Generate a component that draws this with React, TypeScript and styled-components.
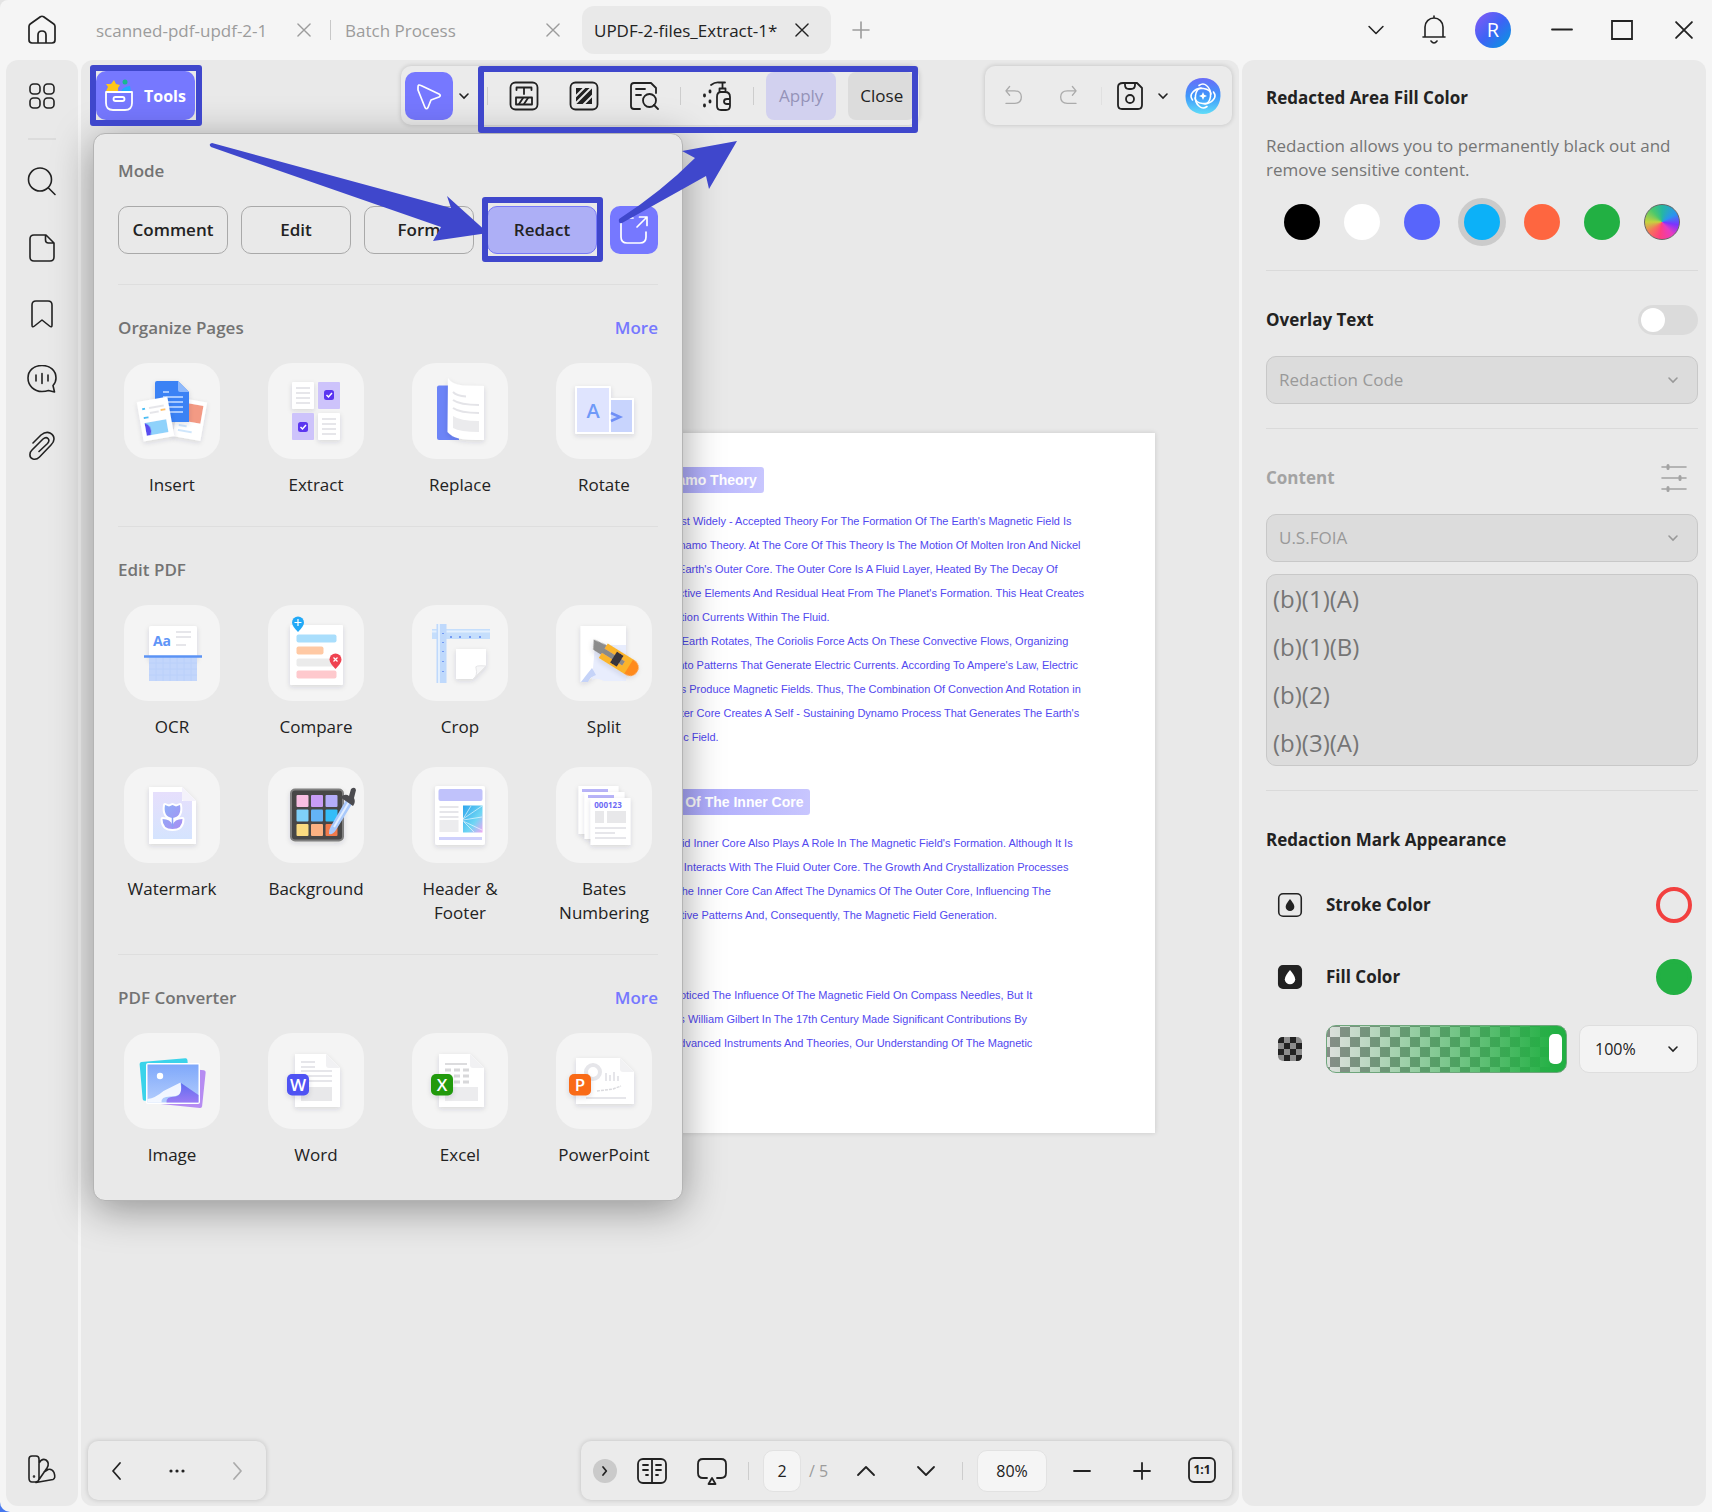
import type { ReactNode } from 'react';
import styled, { createGlobalStyle } from 'styled-components';

const modes = ['Comment', 'Edit', 'Form', 'Redact'];
const swatches = [
  { name: 'Black', color: '#000000' },
  { name: 'White', color: '#ffffff' },
  { name: 'Indigo', color: '#5865fb' },
  { name: 'Sky', color: '#0cb1f8' },
  { name: 'Coral', color: '#fe6640' },
  { name: 'Green', color: '#22b043' },
];
const codes = ['(b)(1)(A)', '(b)(1)(B)', '(b)(2)', '(b)(3)(A)'];

const theoryLines = [
  "The Most Widely - Accepted Theory For The Formation Of The Earth's Magnetic Field Is",
  'The Dynamo Theory. At The Core Of This Theory Is The Motion Of Molten Iron And Nickel',
  "In The Earth's Outer Core. The Outer Core Is A Fluid Layer, Heated By The Decay Of",
  "Radioactive Elements And Residual Heat From The Planet's Formation. This Heat Creates",
  'Convection Currents Within The Fluid.',
  'As The Earth Rotates, The Coriolis Force Acts On These Convective Flows, Organizing',
  "Them Into Patterns That Generate Electric Currents. According To Ampere's Law, Electric",
  'Currents Produce Magnetic Fields. Thus, The Combination Of Convection And Rotation in',
  "The Outer Core Creates A Self - Sustaining Dynamo Process That Generates The Earth's",
  'Magnetic Field.',
];
const coreLines = [
  "The Solid Inner Core Also Plays A Role In The Magnetic Field's Formation. Although It Is",
  'Solid, It Interacts With The Fluid Outer Core. The Growth And Crystallization Processes',
  'Along The Inner Core Can Affect The Dynamics Of The Outer Core, Influencing The',
  'Convective Patterns And, Consequently, The Magnetic Field Generation.',
];
const historyLines = [
  'Noticed The Influence Of The Magnetic Field On Compass Needles, But It',
  'As William Gilbert In The 17th Century Made Significant Contributions By',
  'Advanced Instruments And Theories, Our Understanding Of The Magnetic',
];

/* ---------- line icons ---------- */

type IconProps = { size?: number; w?: number; children: ReactNode };
const Icon = ({ size = 30, w = 1.8, children }: IconProps) => (
  <svg width={size} height={size} viewBox='0 0 30 30' fill='none' stroke='currentColor' strokeWidth={w}
    strokeLinecap='round' strokeLinejoin='round' aria-hidden='true'>
    {children}
  </svg>
);
const CloseIcon = ({ size = 30 }: { size?: number }) => <Icon size={size} w={1.6}><path d='M8 8l14 14M22 8L8 22' /></Icon>;
const PlusIcon = ({ w = 1.6 }: { w?: number }) => <Icon w={w}><path d='M15 7v16M7 15h16' /></Icon>;
const MinusIcon = () => <Icon><path d='M7 15h16' /></Icon>;
const ChevronDown = ({ size = 30 }: { size?: number }) => <Icon size={size}><path d='M7 11l8 8 8-8' /></Icon>;
const ChevronUp = () => <Icon><path d='M7 19l8-8 8 8' /></Icon>;
const Caret = () => <svg width='12' height='12' viewBox='0 0 12 12' fill='none' stroke='currentColor' strokeWidth='1.6' strokeLinecap='round' aria-hidden='true'><path d='M2 4l4 4 4-4' /></svg>;
const HomeIcon = () => <Icon w={1.7}><path d='M2 11.500Q2 10 3.200 9L13.400 1.700Q15 .8 16.600 1.700L26.800 9Q28 10 28 11.500V25q0 3-3 3H5q-3 0-3-3zM11 28v-8q0-4 4-4t4 4v8' /></Icon>;
const BellIcon = () => <Icon w={1.6}><path d='M6 22V12a9 9 0 0118 0v10M4 22h22M15 3V1M12 26q3 4 6 0' /></Icon>;
const MaximizeIcon = () => <Icon><path d='M5 6h20v18H5z' strokeLinejoin='miter' /></Icon>;
const GridIcon = () => (
  <Icon w={1.6}>
    <rect x='3' y='3' width='10' height='10' rx='3.500' /><rect x='17' y='3' width='10' height='10' rx='3.500' />
    <rect x='3' y='17' width='10' height='10' rx='3.500' /><rect x='17' y='17' width='10' height='10' rx='3.500' />
  </Icon>
);
const SearchIcon = () => <Icon w={1.6}><circle cx='13' cy='12.500' r='11.500' /><path d='M21.500 21l6.500 6.500' /></Icon>;
const FileIcon = () => <Icon w={1.6}><path d='M7 2h12l8 8v14q0 4-4 4H7q-4 0-4-4V6q0-4 4-4zM18.500 2.500V7q0 3 3 3h5' /></Icon>;
const BookmarkIcon = () => <Icon w={1.6}><path d='M9 2h12q4 0 4 4v20q0 3-2.500 1L15 21l-7.500 6Q5 29 5 26V6q0-4 4-4z' /></Icon>;
const CommentIcon = () => <Icon w={1.6}><path d='M15 .5c8 0 14 5 14 12.500 0 3-1 5.500-3 7.500l1.500 6.500-6-1.500c-2 .7-4.200 1-6.500 1C7 26.500 1 20.500 1 13S7 .5 15 .5zM9 10v6M15 8.500v10M21 10v6' /></Icon>;
const ClipIcon = () => <Icon w={1.6}><path d='M6 12l8-8q5-4 9-2t4 6q0 3-3 6L12.500 26q-3 3-6.500 2t-3-5q0-2 2-4L16 8q3-2.500 5-.5t-.5 5L12 20.500' /></Icon>;
const PaletteIcon = () => <Icon w={1.6}><path d='M5 2h4q3 0 3 3v19q0 4-4 4H5q-3 0-3-4V5q0-3 3-3zM12 9q3-5 7-3 4 3 1 8l-9 13M17 18l4-2.500q4-1 6 3 2 6-1 7L9 28.500' /><circle cx='7' cy='22.500' r='.5' /></Icon>;
const CursorIcon = () => <Icon w={1.7}><path d='M5 5q0-3 3-1.500L26 12q2.500 1.500 0 3L18 18l-3 7.500q-1.500 2.500-3 0L5 8z' transform='translate(-1 1)' /></Icon>;
const TextRedactIcon = () => (
  <Icon>
    <rect x='1.500' y='1.500' width='27' height='27' rx='5' />
    <path d='M7.500 9V6.500h15V9M15 6.500V13' />
    <rect x='7' y='16.500' width='16' height='7' /><path d='M10 23l4-6M15 23l4-6' />
  </Icon>
);
const AreaRedactIcon = () => (
  <Icon>
    <rect x='1.500' y='1.500' width='27' height='27' rx='5' />
    <path d='M7 7h16v16H7z' fill='currentColor' stroke='none' />
    <path d='M6 16L16 6M6 23L23 6M14 24l10-10' stroke='#e9e9e9' strokeLinecap='butt' strokeWidth='1.800' />
  </Icon>
);
const PageRedactIcon = () => <Icon><path d='M11 28H5q-3 0-3-3V5q0-3 3-3h17l5 5v5M7 8h9M7 14h5' /><circle cx='20.500' cy='19.500' r='6.500' /><path d='M25 24l4 4' /></Icon>;
const SprayIcon = () => (
  <Icon>
    <path d='M9 4q4-3 8-2.500h6M20.500 2v5M17.500 11V7.500h6V11M15 16q0-5 4-5h4q5 0 5 5v9q0 4-4 4h-5q-4 0-4-4zM28 18h-3q-3 0-3 2.500t3 2.500h3' />
    <path d='M8 10v1M2.500 14v1M8 20v1M2.500 24v1' strokeWidth='2.800' />
  </Icon>
);
const UndoIcon = () => <Icon size={22}><path d='M9 2L4 8l5 6M4 8h12q9 0 9 8.500T16 25H4' /></Icon>;
const RedoIcon = () => <Icon size={22}><path d='M21 2l5 6-5 6M26 8H14q-9 0-9 8.500T14 25h12' /></Icon>;
const SaveIcon = () => <Icon><path d='M8 2h14l5 5v17q0 4-4 4H7q-4 0-4-4V6q0-4 5-4zM10 2v2q0 4 4 4h2q4 0 4-4V2' /><circle cx='15' cy='18' r='4' /></Icon>;
const ExportIcon = () => <Icon w={1.7}><path d='M14 3H7Q2 3 2 8v14q0 6 6 6h13q6 0 6-6v-5M18 12L28 2M20.500 2H28v8.500' /></Icon>;
const TuneIcon = () => (
  <Icon w={1.6}>
    <path d='M3 4h24M3 15h24M3 26h24' /><path d='M9 2.500v3M21 13.500v3M9 24.500v3' strokeWidth='3' />
  </Icon>
);
const SpreadIcon = () => <Icon><rect x='1' y='3' width='28' height='24' rx='5' /><path d='M15 3v24M6 9h5M6 14h5M9 19h2M19 9h5M19 14h5M19 19h2' /></Icon>;
const PresentIcon = () => <Icon><path d='M10 22H6q-5 0-5-5V8q0-5 5-5h18q5 0 5 5v9q0 5-5 5h-4M15 22l-3.500 6h7z' /></Icon>;
const ActualSizeIcon = () => (
  <Icon>
    <rect x='2' y='2' width='26' height='24' rx='5' />
    <text x='15' y='18' textAnchor='middle' fontSize='12' fontWeight='700' fontFamily='Open Sans' fill='currentColor' stroke='none'>1:1</text>
  </Icon>
);
const StrokeIcon = () => <Icon size={26}><rect x='2' y='2' width='26' height='26' rx='5' /><path d='M15 8q5 6 5 9a5 5 0 01-10 0q0-3 5-9z' fill='currentColor' stroke='none' /></Icon>;
const FillIcon = () => <Icon size={26}><rect x='2' y='2' width='26' height='26' rx='5' fill='currentColor' /><path d='M15 7q6 7 6 10.500a6 6 0 01-12 0Q9 14 15 7z' fill='#fff' stroke='none' /></Icon>;
const CheckerIcon = () => (
  <svg width='24' height='24' viewBox='0 0 24 24' aria-hidden='true'>
    <rect width='24' height='24' rx='5' fill='#8c8c8c' />
    <path d='M5 0h1v6H0V5q0-5 5-5zM12 0h6v6h-6zM6 6h6v6H6zM18 6h6v6h-6zM0 12h6v6H0zM12 12h6v6h-6zM6 18h6v6H6zM18 18h6v1q0 5-5 5h-1z' fill='#222' />
  </svg>
);
const ToolsIcon = () => (
  <svg width='32' height='34' viewBox='0 0 32 34' aria-hidden='true'>
    <path d='M2 12l2-4-2-3 5 0 3-4 2 4 4 1-2 3v3z' fill='#ffc61a' />
    <circle cx='21' cy='3' r='2.500' fill='#17b890' />
    <path d='M17 13q1-5 9-6l1 6z' fill='#21a8ff' />
    <path d='M2 13h26v11q0 7-7 7H9q-7 0-7-7z' fill='#7678ff' stroke='#fff' strokeWidth='1.800' strokeLinejoin='round' />
    <rect x='9.500' y='18' width='11' height='4' rx='2' fill='none' stroke='#fff' strokeWidth='1.800' />
  </svg>
);
const AssistantIcon = () => (
  <svg width='36' height='36' viewBox='0 0 36 36' aria-hidden='true'>
    <defs><linearGradient id='ai' x1='0' y1='0' x2='0' y2='1'><stop offset='0' stopColor='#6a6cf8' /><stop offset='.5' stopColor='#3f97fb' /><stop offset='1' stopColor='#5fdcf8' /></linearGradient></defs>
    <path d='M18 0q8 0 13 5 5 5 4.500 13-.5 8-5 13-5 5-12.500 5T5 31Q.500 26 .500 18T5 5q5-5 13-5z' fill='url(#ai)' />
    <g fill='none' stroke='#fff' strokeWidth='1.600' strokeLinecap='round'>
      <path d='M14 7.500q4-3 7.500 0 5 4 4 11T20 26' /><path d='M28.500 14q3 4 0 7.500-4 5-11 4T10 20' />
      <path d='M22 28.500q-4 3-7.500 0-5-4-4-11T16 10' /><path d='M7.500 22q-3-4 0-7.500 4-5 11-4T26 16' />
    </g>
    <path d='M18 14l1.200 2.800L22 18l-2.800 1.200L18 22l-1.200-2.800L14 18l2.800-1.200z' fill='#fff' />
  </svg>
);

/* ---------- tool artwork, drawn on a 96 x 96 tile ---------- */

const Lines = ({ x, y, widths, gap = 5, color = '#e6e6ea' }: { x: number; y: number; widths: number[]; gap?: number; color?: string }) => (
  <g stroke={color} strokeWidth='2'>
    {widths.map((len, i) => <path key={i} d={`M${x} ${y + i * gap}h${len}`} />)}
  </g>
);
const FoldedPage = ({ x, y, w, h }: { x: number; y: number; w: number; h: number }) => (
  <g>
    <path d={`M${x} ${y}h${w - 14}l14 14v${h - 14}h${-w}z`} fill='#fff' filter='url(#soft)' />
    <path d={`M${x + w - 14} ${y}v11q0 3 3 3h11z`} fill='#f1f1f3' />
  </g>
);
const Badge = ({ x, color, letter }: { x: number; color: string; letter: string }) => (
  <g>
    <rect x={x} y='41' width='22' height='21.500' rx='5' fill={color} filter='url(#soft)' />
    <text x={x + 11} y='58' textAnchor='middle' fontSize='17' fontWeight='600' fontFamily='Open Sans' fill='#fff'>{letter}</text>
  </g>
);

const art: Record<string, ReactNode> = {
  Insert: (
    <>
      <g transform='rotate(10 67 56)' filter='url(#soft)'>
        <rect x='52' y='37' width='28' height='39' fill='#fff' /><rect x='55' y='41' width='22' height='18' fill='#f39a84' />
        <Lines x={56} y={64} widths={[8, 14]} color='#cfe6fb' />
      </g>
      <g filter='url(#soft)'>
        <path d='M33 18h21l11 11v30H33q-2 0-2-2V20q0-2 2-2z' fill='#3a82f5' /><path d='M54 18v9q0 2 2 2h9z' fill='#8fb9fb' />
        <Lines x={39} y={29} widths={[6, 20, 20, 20, 20]} color='#a5c8ff' />
      </g>
      <g transform='rotate(-10 32 56)' filter='url(#soft)'>
        <rect x='16' y='36' width='31' height='40' rx='1' fill='#fff' />
        <path d='M20 44h3M20 53h5' stroke='#4cc1f4' strokeWidth='2' /><path d='M38 48h5' stroke='#ffc56b' strokeWidth='2' />
        <Lines x={27} y={44} widths={[15, 9]} />
        <rect x='20' y='58' width='22' height='13' fill='#8fd2fb' /><path d='M20 58q8 4 4 13h-4z' fill='#5a4df0' />
      </g>
    </>
  ),
  Extract: (
    <>
      <rect x='24' y='19' width='22' height='27' rx='1' fill='#fff' filter='url(#soft)' /><Lines x={28} y={25} widths={[14, 14, 14, 14]} />
      <rect x='50' y='19' width='22' height='27' rx='1' fill='#cdc3fb' />
      <rect x='24' y='50' width='22' height='27' rx='1' fill='#cdc3fb' />
      <rect x='50' y='50' width='22' height='27' rx='1' fill='#fff' filter='url(#soft)' /><Lines x={54} y={56} widths={[14, 14, 14, 14]} />
      <rect x='56' y='27' width='10' height='10' rx='2.500' fill='#5b35f0' /><rect x='30' y='59' width='10' height='10' rx='2.500' fill='#5b35f0' />
      <path d='M58.500 32l2 2 3.500-4M32.500 64l2 2 3.500-4' fill='none' stroke='#fff' strokeWidth='1.500' />
    </>
  ),
  Replace: (
    <>
      <path d='M27 22.500h20V77H27q-2 0-2-2V24.500q0-2 2-2z' fill='#6c84f7' />
      <path d='M36 15q3 6 15 7.500l21 .5v54q-18 0-25-1.500T35.500 69z' fill='#fff' filter='url(#soft)' />
      <path d='M41 29q4 4 13 4.500M41 37q7 5 26 5M41 45q7 5 26 5' fill='none' stroke='#e4e4e8' strokeWidth='2' />
      <path d='M41 53q7 5 26 5v11q-19 0-26-4z' fill='#ebebed' />
    </>
  ),
  Rotate: (
    <>
      <g filter='url(#soft)'>
        <rect x='54' y='35' width='24' height='36' fill='#fff' /><rect x='54' y='37' width='22' height='32' fill='#c8d4fd' />
        <rect x='19' y='23' width='36' height='48' rx='1' fill='#fff' /><rect x='21' y='25' width='32' height='44' fill='#dfe4fe' />
      </g>
      <text x='37' y='55' textAnchor='middle' fontSize='20' fontWeight='600' fontFamily='Open Sans' fill='#6f9af8'>A</text>
      <path d='M55 50l9 4-9 4' fill='none' stroke='#6f8ff6' strokeWidth='2.500' />
    </>
  ),
  OCR: (
    <>
      <rect x='25' y='21' width='48' height='34' rx='2' fill='#fff' filter='url(#soft)' />
      <text x='38' y='41' textAnchor='middle' fontSize='14' fontWeight='700' fontFamily='Open Sans' fill='#5f95f7'>Aa</text>
      <Lines x={52} y={27} widths={[15, 15]} gap={5} /><Lines x={52} y={40} widths={[10]} />
      <path d='M25 52h48v24H25z' fill='#c3d6fb' /><path d='M25 58h48M25 64h48M25 70h48M32 52v24M39 52v24M46 52v24M53 52v24M60 52v24M67 52v24' stroke='#bad0fa' />
      <path d='M20 51.500h58' stroke='#5b93f5' strokeWidth='2.500' />
    </>
  ),
  Compare: (
    <>
      <rect x='22' y='20' width='53' height='60' rx='1' fill='#fff' filter='url(#soft)' />
      <rect x='28.500' y='29.500' width='40' height='8' rx='2' fill='#a9defc' /><rect x='28.500' y='41.500' width='27' height='8' rx='2' fill='#ffc9a4' />
      <rect x='28.500' y='53.500' width='40' height='8' rx='2' fill='#ebebeb' /><rect x='28.500' y='65.500' width='40' height='8' rx='2' fill='#fec9cd' />
      <path d='M30 27q-6-6-6-9.500a6 6 0 0112 0Q36 21 30 27z' fill='#22a9f7' /><path d='M30 14v7M26.500 17.500h7' stroke='#fff' strokeWidth='1.200' />
      <path d='M67.500 64q-6-6-6-9.500a6 6 0 0112 0q0 3.500-6 9.500z' fill='#ef4351' /><path d='M65.500 52.500l4 4M69.500 52.500l-4 4' stroke='#fff' strokeWidth='1.200' />
    </>
  ),
  Crop: (
    <>
      <path d='M20 24h58v10H20z' fill='#c5defc' /><path d='M20 26.500h58' stroke='#e4f0fe' strokeWidth='2' />
      <path d='M24.500 19h10v59h-10z' fill='#bfd9fc' /><path d='M27 19v59' stroke='#e4f0fe' strokeWidth='2' />
      <path d='M31 28v1M31 37v1M31 46v1M31 56v1M31 66v1M39 31v2M48 31v2M58 31v2M68 31v2' stroke='#5a84f0' strokeWidth='1.500' />
      <path d='M44 44h30v17L61 74H44z' fill='#fff' filter='url(#soft)' /><path d='M74 61q-12-1-10 2 2 8-3 11z' fill='#f7f7f8' stroke='#e6e6e8' />
    </>
  ),
  Split: (
    <>
      <g filter='url(#soft)'><path d='M24.500 21H70v48L48 70q-7-5-10 0-5 7-13.500 7z' fill='#fff' /></g>
      <path d='M39 40h31v36H48q-8-4-12-1z' fill='#e8edfd' /><path d='M25 77q6-8 11-14l4 7q-6 2-8 7z' fill='#c5d3f8' />
      <g transform='rotate(32 58 53)' filter='url(#soft)'>
        <path d='M31 48l14-2v11H36z' fill='#8c8c8c' /><path d='M45 44h30v17H45z' fill='#fbb42a' />
        <path d='M75 44q10 0 10 8.500T75 61z' fill='#ff8a1c' /><path d='M45 50h24v5H45z' fill='#8a8a8a' /><path d='M57 46h8v13h-8z' fill='#38363c' />
      </g>
    </>
  ),
  Watermark: (
    <>
      <defs><linearGradient id='wm' x1='0' y1='0' x2='0' y2='1'><stop offset='0' stopColor='#e6dffc' /><stop offset='1' stopColor='#d5e4fe' /></linearGradient>
        <linearGradient id='tulip' x1='0' y1='0' x2='1' y2='1'><stop offset='0' stopColor='#8fb0f8' /><stop offset='1' stopColor='#a88df2' /></linearGradient></defs>
      <path d='M25 20h33l14 14v43H25z' fill='#fff' filter='url(#soft)' /><path d='M29 25h29v9h10v38H29z' fill='url(#wm)' />
      <path d='M58 20v12q0 2 2 2h12z' fill='#f4f2fb' />
      <g fill='url(#tulip)' stroke='#fff' strokeWidth='4' paintOrder='stroke' strokeLinejoin='round'>
        <path d='M41 38l4 1.500 3.500-1.500 3.500 1.500 4-1.500q2 12-7.500 13Q39 50 41 38zM48.500 62q-10 0-10-10 8 0 10 6 2-6 10-6 0 10-10 10z' />
      </g>
      <path d='M48.500 50v10' stroke='#8aa0f5' strokeWidth='1.500' />
    </>
  ),
  Background: (
    <>
      <rect x='23' y='22.500' width='52' height='51' rx='4' fill='#464646' stroke='#808080' strokeWidth='2' filter='url(#soft)' />
      {['#f8bfe3', '#c89cf6', '#b4adfa', '#7fd0f8', '#64b4f7', '#33bdf8', '#fadb80', '#fbb182', '#f07a4b'].map((c, i) => (
        <rect key={c} x={28.500 + (i % 3) * 14.500} y={28 + Math.floor(i / 3) * 14.500} width='12' height='12' rx='1' fill={c} />
      ))}
      <path d='M78 33l6 4-16 26q-3 5-7 4 0-5 2-8z' fill='#a9c9fb' /><path d='M81 35l-15 25' stroke='#e2eefe' strokeWidth='2' />
      <path d='M72 30q6-4 9-1l2-7q4-3 5 1l-2 8q2 4-1 8z' fill='#4b4b4f' />
    </>
  ),
  'Header &\nFooter': (
    <>
      <defs><linearGradient id='hf' x1='0' y1='0' x2='1' y2='1'><stop offset='0' stopColor='#2fa5ec' /><stop offset='.6' stopColor='#6fd6f4' /><stop offset='1' stopColor='#f0a6f2' /></linearGradient></defs>
      <rect x='23' y='19' width='50' height='59' rx='2' fill='#fff' filter='url(#soft)' />
      <rect x='26.500' y='22' width='44' height='12' rx='2' fill='#c0c2fb' /><Lines x={27.500} y={40} widths={[19, 19, 19]} />
      <rect x='27.500' y='53' width='19' height='12' fill='#ececee' /><rect x='51' y='38.500' width='19.500' height='27' fill='url(#hf)' />
      <path d='M51 52l19-13M51 53l19-3M51 54l19 9M51 52l8-13M52 55l10 10' stroke='#fff' strokeOpacity='.6' />
      <path d='M27 71.500h43' stroke='#cfd1fc' strokeWidth='3' />
    </>
  ),
  'Bates\nNumbering': (
    <>
      <rect x='22.500' y='19' width='40' height='48' fill='#fff' filter='url(#soft)' /><path d='M26 23.500h26' stroke='#b9b5fa' strokeWidth='3' />
      <rect x='28.500' y='25' width='40' height='47' fill='#fff' filter='url(#soft)' /><path d='M32 29.500h26' stroke='#b9b5fa' strokeWidth='3' />
      <rect x='34.500' y='31' width='40' height='47' fill='#fff' filter='url(#soft)' />
      <text x='52' y='40.500' textAnchor='middle' fontSize='8' fontWeight='700' fontFamily='Open Sans' fill='#6d6af5'>000123</text>
      <path d='M39 44h9v12h-9zM51 44h19v12H51z' fill='#e8e8ea' /><Lines x={39} y={61} widths={[31, 20, 31]} />
    </>
  ),
  Image: (
    <>
      <defs><linearGradient id='sky' x1='0' y1='0' x2='0' y2='1'><stop offset='0' stopColor='#7fa8fa' /><stop offset='1' stopColor='#b3cdfd' /></linearGradient>
        <linearGradient id='hill' x1='0' y1='0' x2='0' y2='1'><stop offset='0' stopColor='#5f6cf0' /><stop offset='1' stopColor='#9b7cf4' /></linearGradient></defs>
      <rect x='17' y='27' width='48' height='39' rx='2' fill='#3bd3ea' transform='rotate(-5 41 46)' />
      <rect x='34' y='35' width='46' height='38' rx='2' fill='#b68cf2' transform='rotate(6 57 54)' />
      <rect x='22' y='30' width='54' height='41' rx='2' fill='#fff' /><rect x='23.500' y='31.500' width='51' height='38' fill='url(#sky)' />
      <circle cx='36' cy='43' r='3.200' fill='#fff' /><path d='M23.500 66q8-1 16-8l17-8.500 1 8q-1 6-11 6t-9 6h-14z' fill='#fff' fillOpacity='.85' />
      <path d='M57 50l17.500 12v7.500H42.500q-1-6 9-6 7-1 5.500-13.500z' fill='url(#hill)' />
    </>
  ),
  Word: (
    <>
      <FoldedPage x={27} y={21} w={45} h={53} /><Lines x={33} y={29} widths={[14, 14]} /><Lines x={33} y={38} widths={[31, 31, 31]} />
      <rect x='33' y='54' width='31' height='14' fill='#e8e8ea' /><Badge x={19} color='#4f53f3' letter='W' />
    </>
  ),
  Excel: (
    <>
      <FoldedPage x={27} y={21} w={45} h={53} /><Lines x={33} y={31} widths={[22]} color='#dcdcde' />
      <path d='M33 37h24M33 43h24M33 49h24' stroke='#d8d8da' strokeWidth='3' strokeDasharray='6 3' />
      <rect x='33' y='54' width='33' height='14' fill='#ececee' /><Badge x={19} color='#219a0b' letter='X' />
    </>
  ),
  PowerPoint: (
    <>
      <FoldedPage x={20} y={25} w={58} h={46} /><circle cx='37' cy='39' r='7' fill='none' stroke='#e6e6ea' strokeWidth='4' />
      <path d='M50 48v-8M54 48v-6M58 48v-9M62 48v-5' stroke='#e6e6ea' strokeWidth='2' /><path d='M41 58l8-1 8-1 8-3' fill='none' stroke='#dadade' strokeDasharray='3 1' strokeWidth='1.500' />
      <Lines x={30} y={65} widths={[40]} /><Badge x={13} color='#f96b15' letter='P' />
    </>
  ),
};

const sections = [
  { title: 'Organize Pages', more: true, tools: ['Insert', 'Extract', 'Replace', 'Rotate'] },
  { title: 'Edit PDF', more: false, tools: ['OCR', 'Compare', 'Crop', 'Split', 'Watermark', 'Background', 'Header &\nFooter', 'Bates\nNumbering'] },
  { title: 'PDF Converter', more: true, tools: ['Image', 'Word', 'Excel', 'PowerPoint'] },
];

const ToolsMenu = () => (
  <Menu>
    <SectionTitle>Mode</SectionTitle>
    <ModeRow>
      {modes.map((mode) => <ModeButton key={mode} $active={mode === 'Redact'}>{mode}</ModeButton>)}
      <AccentButton aria-label='Open in new window'><ExportIcon /></AccentButton>
    </ModeRow>
    {sections.map((section) => (
      <MenuSection key={section.title}>
        <SectionHead>
          <SectionTitle>{section.title}</SectionTitle>
          {section.more && <MoreLink href='#more'>More</MoreLink>}
        </SectionHead>
        <ToolGrid>
          {section.tools.map((tool) => (
            <ToolButton key={tool}>
              <ToolTile><svg viewBox='0 0 96 96' aria-hidden='true'>{art[tool]}</svg></ToolTile>
              <span>{tool}</span>
            </ToolButton>
          ))}
        </ToolGrid>
      </MenuSection>
    ))}
  </Menu>
);

const RedactPanel = () => (
  <Panel>
    <PanelSection>
      <PanelTitle>Redacted Area Fill Color</PanelTitle>
      <Hint>Redaction allows you to permanently black out and remove sensitive content.</Hint>
      <SwatchRow>
        {swatches.map((s) => <Swatch key={s.name} type='radio' name='fill' aria-label={s.name} defaultChecked={s.name === 'Sky'} $color={s.color} />)}
        <RainbowButton aria-label='Custom color' />
      </SwatchRow>
    </PanelSection>
    <PanelSection>
      <PanelRow>
        <PanelTitle as='label' htmlFor='overlay'>Overlay Text</PanelTitle>
        <Toggle id='overlay' type='checkbox' />
      </PanelRow>
      <SelectBox>
        <Select disabled aria-label='Overlay type'><option>Redaction Code</option></Select>
        <Caret />
      </SelectBox>
    </PanelSection>
    <PanelSection>
      <PanelRow $muted>
        <PanelTitle>Content</PanelTitle>
        <PlainButton aria-label='Content settings'><TuneIcon /></PlainButton>
      </PanelRow>
      <SelectBox>
        <Select disabled aria-label='Code set'><option>U.S.FOIA</option></Select>
        <Caret />
      </SelectBox>
      <CodeList>{codes.map((code) => <li key={code}>{code}</li>)}</CodeList>
    </PanelSection>
    <PanelSection>
      <PanelTitle>Redaction Mark Appearance</PanelTitle>
      <MarkRows>
        <MarkRow><StrokeIcon /><strong id='stroke'>Stroke Color</strong><ColorDot aria-labelledby='stroke' $stroke='#f2403f' /></MarkRow>
        <MarkRow><FillIcon /><strong id='fillc'>Fill Color</strong><ColorDot aria-labelledby='fillc' $fill='#22b043' $stroke='#22b043' /></MarkRow>
        <OpacityRow>
          <CheckerIcon />
          <Opacity type='range' min='0' max='100' defaultValue='100' aria-label='Opacity' />
          <SelectBox $light>
            <Select $light aria-label='Opacity percent'><option>100%</option></Select>
            <Caret />
          </SelectBox>
        </OpacityRow>
      </MarkRows>
    </PanelSection>
  </Panel>
);

const App = () => {
  return (
    <Desktop>
      <GlobalStyle />
      <Frame>
        <TitleBar>
          <HomeButton aria-label='Home'><HomeIcon /></HomeButton>
          <Tab><span>scanned-pdf-updf-2-1</span><PlainButton aria-label='Close tab'><CloseIcon size={26} /></PlainButton></Tab>
          <Tab><span>Batch Process</span><PlainButton aria-label='Close tab'><CloseIcon size={26} /></PlainButton></Tab>
          <Tab $active><span>UPDF-2-files_Extract-1*</span><PlainButton aria-label='Close tab'><CloseIcon size={26} /></PlainButton></Tab>
          <NewTab aria-label='New tab'><PlusIcon /></NewTab>
          <WindowControls>
            <PlainButton aria-label='More tabs'><ChevronDown size={26} /></PlainButton>
            <PlainButton aria-label='Notifications'><BellIcon /></PlainButton>
            <Avatar>R</Avatar>
            <PlainButton aria-label='Minimize'><Icon><path d='M5 14.500h20' /></Icon></PlainButton>
            <PlainButton aria-label='Maximize'><MaximizeIcon /></PlainButton>
            <PlainButton aria-label='Close window'><CloseIcon size={34} /></PlainButton>
          </WindowControls>
        </TitleBar>
        <Body>
          <Rail>
            <PlainButton aria-label='Thumbnails'><GridIcon /></PlainButton>
            <hr />
            <PlainButton aria-label='Search'><SearchIcon /></PlainButton>
            <PlainButton aria-label='Pages'><FileIcon /></PlainButton>
            <PlainButton aria-label='Bookmarks'><BookmarkIcon /></PlainButton>
            <PlainButton aria-label='Comments'><CommentIcon /></PlainButton>
            <PlainButton aria-label='Attachments'><ClipIcon /></PlainButton>
            <PlainButton aria-label='Theme'><PaletteIcon /></PlainButton>
          </Rail>
          <Main>
            <TopBar>
              <ToolsButton><ToolsIcon />Tools</ToolsButton>
              <RedactBar>
                <AccentButton aria-label='Select'><CursorIcon /></AccentButton>
                <CaretButton aria-label='Select options'><Caret /></CaretButton>
                <Separator />
                <IconCell aria-label='Redact text'><TextRedactIcon /></IconCell>
                <IconCell aria-label='Redact area'><AreaRedactIcon /></IconCell>
                <IconCell aria-label='Find and redact'><PageRedactIcon /></IconCell>
                <Separator />
                <IconCell aria-label='Sanitize'><SprayIcon /></IconCell>
                <Separator />
                <BarButton $tone='apply'>Apply</BarButton>
                <BarButton $tone='close'>Close</BarButton>
              </RedactBar>
              <FileBar>
                <IconCell $muted $width={54} aria-label='Undo'><UndoIcon /></IconCell>
                <IconCell $muted $width={54} aria-label='Redo'><RedoIcon /></IconCell>
                <Separator $faint />
                <IconCell $width={44} aria-label='Save'><SaveIcon /></IconCell>
                <CaretButton aria-label='Save options'><Caret /></CaretButton>
                <IconCell $width={58} aria-label='Assistant'><AssistantIcon /></IconCell>
              </FileBar>
            </TopBar>
            <Canvas>
              <Page>
                <PageText>
                  <PageHeading>Dynamo Theory</PageHeading>
                  <PageLines>{theoryLines.map((line) => <li key={line}>{line}</li>)}</PageLines>
                  <PageHeading>Role Of The Inner Core</PageHeading>
                  <PageLines>{coreLines.map((line) => <li key={line}>{line}</li>)}</PageLines>
                  <PageLines $nested>{historyLines.map((line) => <li key={line}>{line}</li>)}</PageLines>
                </PageText>
              </Page>
            </Canvas>
            <BottomBar>
              <HistoryBar>
                <PlainButton aria-label='Back'><Icon><path d='M18 7l-7 8 7 8' /></Icon></PlainButton>
                <PlainButton aria-label='More'><Icon w={3.2}><path d='M9 15h0M15 15h0M21 15h0' /></Icon></PlainButton>
                <PlainButton $muted aria-label='Forward'><Icon><path d='M12 7l7 8-7 8' /></Icon></PlainButton>
              </HistoryBar>
              <ViewBar>
                <RoundButton aria-label='Collapse'><Icon size={20} w={2.6}><path d='M12 9l5 6-5 6' /></Icon></RoundButton>
                <ViewCell aria-label='Layout'><SpreadIcon /></ViewCell>
                <ViewCell aria-label='Present'><PresentIcon /></ViewCell>
                <Separator />
                <NumberBox defaultValue='2' aria-label='Page' $width={38} />
                <PageTotal>/ 5</PageTotal>
                <ViewCell aria-label='Previous page'><ChevronUp /></ViewCell>
                <ViewCell aria-label='Next page'><ChevronDown /></ViewCell>
                <Separator />
                <NumberBox defaultValue='80%' aria-label='Zoom' $width={70} />
                <ViewCell aria-label='Zoom out'><MinusIcon /></ViewCell>
                <ViewCell aria-label='Zoom in'><PlusIcon w={1.8} /></ViewCell>
                <ViewCell aria-label='Actual size'><ActualSizeIcon /></ViewCell>
              </ViewBar>
            </BottomBar>
            <ToolsMenu />
            <Guides viewBox='0 0 850 220' aria-hidden='true'>
              <g fill='none' stroke='#3f47cc' strokeWidth='6' strokeLinejoin='round'>
                <rect x='12' y='8' width='106' height='55' /><rect x='400' y='9' width='434' height='61' /><rect x='404' y='140' width='115' height='59' />
              </g>
              <g fill='#3f47cc'>
                <path d='M131 83l239 65-4-12 41 37-55 8 8-14L130 87q-3-3 1-4z' />
                <path d='M538 159Q580 132 614 98l-13-7 55-10-28 48-3-13L541 163q-4 1-3-4z' />
              </g>
            </Guides>
          </Main>
          <RedactPanel />
        </Body>
      </Frame>
      <Defs aria-hidden='true'>
        <filter id='soft' x='-30%' y='-30%' width='160%' height='170%'>
          <feDropShadow dx='0' dy='2' stdDeviation='2.500' floodColor='#30303a' floodOpacity='.14' />
        </filter>
      </Defs>
    </Desktop>
  );
};
export default App;

const GlobalStyle = createGlobalStyle`
  *, *::before, *::after { box-sizing: border-box; }
  body {
    margin: 0;
    font-family: 'Open Sans', 'Noto Sans', sans-serif;
    font-size: 17px;
    line-height: 24px;
    color: #222;
  }
  button, input, select { font: inherit; color: inherit; }
  button {
    border: 0;
    padding: 0;
    background: none;
    cursor: pointer;
  }
  svg { display: block; flex: none; }
  h2, p, ul { margin: 0; padding: 0; font-size: inherit; font-weight: inherit; }
  ul { list-style: none; }
`;

const Defs = styled.svg`
  position: absolute;
  width: 0;
  height: 0;
`;
const Desktop = styled.div`
  min-height: 100vh;
  display: flex;
  background: linear-gradient(to bottom, #e4e4e4 50%, #4577ee 50%);
`;
const Frame = styled.div`
  flex: 1;
  min-width: 0;
  display: flex;
  flex-direction: column;
  background: #f5f5f5;
  border-radius: 8px 0 0 10px;
`;

const PlainButton = styled.button<{ $muted?: boolean }>`
  display: flex;
  align-items: center;
  justify-content: center;
  color: ${(p) => (p.$muted ? '#ababab' : 'inherit')};
`;
const TitleBar = styled.header`
  height: 60px;
  display: flex;
  align-items: center;
  padding: 0 11px 0 27px;
`;
const HomeButton = styled(PlainButton)`
  margin-right: 27px;
`;
const Tab = styled.div<{ $active?: boolean }>`
  width: 249px;
  height: 48px;
  display: flex;
  align-items: center;
  justify-content: space-between;
  padding: 0 16px 0 12px;
  border-radius: 12px;
  color: ${(p) => (p.$active ? '#222' : '#9c9c9c')};
  background: ${(p) => (p.$active ? '#e9e9e9' : 'none')};
  span { padding-top: 2px; }
  & + & {
    position: relative;
  }
  & + &::before {
    content: '';
    position: absolute;
    left: -3px;
    top: 14px;
    width: 1px;
    height: 20px;
    background: #c8c8c8;
  }
`;
const NewTab = styled(PlainButton)`
  margin-left: 15px;
  color: #9c9c9c;
`;
const WindowControls = styled.div`
  margin-left: auto;
  display: flex;
  align-items: center;
  gap: 30px;
`;
const Avatar = styled.button`
  width: 36px;
  height: 36px;
  margin: 0 6px 0 -4px;
  border-radius: 50%;
  color: #fff;
  font-size: 20px;
  background: linear-gradient(135deg, #7a5cf5 10%, #3d63f5 50%, #0797e0 95%);
`;

const Body = styled.div`
  flex: 1;
  display: grid;
  grid-template-columns: 72px minmax(0, 1fr) 464px;
  gap: 3px;
  padding: 0 6px 6px;
`;
const Rail = styled.nav`
  display: flex;
  flex-direction: column;
  align-items: center;
  gap: 36px;
  padding: 21px 0 22px;
  border-radius: 12px;
  background: #e9e9e9;
  hr {
    width: 28px;
    margin: -9px 0;
    border: 0;
    border-top: 2px solid #dcdcdc;
  }
  & > :last-child { margin-top: auto; }
`;
const Main = styled.main`
  position: relative;
  display: flex;
  flex-direction: column;
  border-radius: 12px;
  background: #e9e9e9;
`;

const Bar = styled.div`
  height: 59px;
  display: flex;
  align-items: center;
  border-radius: 10px;
  background: #ebebeb;
  box-shadow: 0 0 5px rgba(0, 0, 0, 0.18);
`;
const TopBar = styled.div`
  display: flex;
  align-items: center;
  padding: 6px 7px 0 15px;
`;
const BottomBar = styled.div`
  display: flex;
  justify-content: space-between;
  padding: 0 7px 6px;
`;
const ToolsButton = styled.button`
  width: 99px;
  height: 49px;
  display: flex;
  align-items: center;
  gap: 8px;
  padding-left: 8px;
  border-radius: 10px;
  color: #fff;
  font-size: 16px;
  font-weight: 700;
  background: #7678ff;
`;
const RedactBar = styled(Bar)`
  margin-left: 206px;
  padding: 0 4px;
`;
const FileBar = styled(Bar)`
  margin-left: auto;
  padding-left: 2px;
`;
const AccentButton = styled.button`
  width: 48px;
  height: 48px;
  display: grid;
  place-items: center;
  border-radius: 10px;
  color: #fff;
  background: #7678ff;
`;
const CaretButton = styled(PlainButton)`
  width: 22px;
  height: 48px;
`;
const IconCell = styled(PlainButton)<{ $width?: number }>`
  width: ${(p) => p.$width ?? 60}px;
  height: 48px;
`;
const Separator = styled.span<{ $faint?: boolean }>`
  width: 1px;
  height: 18px;
  margin: 0 6px;
  background: ${(p) => (p.$faint ? '#e0e0e0' : '#cdcdcd')};
  ${CaretButton} + & { margin-left: 12px; }
`;
const BarButton = styled.button<{ $tone: 'apply' | 'close' }>`
  height: 48px;
  margin-left: ${(p) => (p.$tone === 'apply' ? 6 : 12)}px;
  padding: 0 ${(p) => (p.$tone === 'apply' ? 13 : 12)}px;
  border-radius: 8px;
  color: ${(p) => (p.$tone === 'apply' ? '#9593b8' : '#222')};
  background: ${(p) => (p.$tone === 'apply' ? '#d2d1ef' : '#dcdcdc')};
`;

const Canvas = styled.div`
  flex: 1;
  display: flex;
  align-items: center;
  justify-content: center;
`;
const Page = styled.article`
  width: 990px;
  height: 700px;
  padding-top: 34px;
  background: #fff;
  box-shadow: 0 0 5px rgba(0, 0, 0, 0.14);
`;
const PageText = styled.div`
  width: 541px;
  margin-left: auto;
  font-family: 'Liberation Sans', Arial, sans-serif;
`;
const PageHeading = styled.h2`
  width: fit-content;
  padding: 0 7px 0 37px;
  border-radius: 3px;
  color: #fff;
  font-size: 14px;
  font-weight: 700;
  line-height: 26px;
  background: linear-gradient(to right, #9a98fa, #c8c6fe);
  ul + & { margin-top: 40px; }
`;
const PageLines = styled.ul<{ $nested?: boolean }>`
  margin-top: ${(p) => (p.$nested ? 56 : 16)}px;
  padding-left: ${(p) => (p.$nested ? 58 : 30)}px;
  color: #5248f0;
  font-size: 11px;
  line-height: 24px;
  white-space: nowrap;
`;

const HistoryBar = styled(Bar)`
  width: 178px;
  justify-content: space-between;
  padding: 0 14px;
`;
const ViewBar = styled(Bar)`
  padding: 0 0 0 12px;
`;
const ViewCell = styled(PlainButton)`
  width: 60px;
  height: 48px;
`;
const RoundButton = styled(PlainButton)`
  width: 24px;
  height: 24px;
  margin-right: 5px;
  border-radius: 50%;
  background: #cacaca;
`;
const NumberBox = styled.input<{ $width: number }>`
  width: ${(p) => p.$width}px;
  height: 42px;
  margin: 0 5px 0 8px;
  padding: 0;
  border: 1px solid #e2e2e2;
  border-radius: 10px;
  font-size: 16px;
  text-align: center;
  background: #f5f5f5;
`;
const PageTotal = styled.span`
  width: 30px;
  padding-left: 3px;
  color: #9c9c9c;
  font-size: 16px;
`;

const Menu = styled.div`
  position: absolute;
  top: 73px;
  left: 12px;
  width: 590px;
  padding: 25px 24px 33px;
  border: 1px solid #b4b4b4;
  border-radius: 12px;
  background: #e9e9e9;
  box-shadow: 0 8px 40px rgba(0, 0, 0, 0.38);
`;
const SectionTitle = styled.h2`
  color: #737373;
  font-weight: 600;
`;
const ModeRow = styled.div`
  display: flex;
  justify-content: space-between;
  margin: 23px 0 30px;
`;
const ModeButton = styled.button<{ $active: boolean }>`
  width: 110px;
  height: 48px;
  border: 1px solid ${(p) => (p.$active ? '#7678f8' : '#a9a9a9')};
  border-radius: 10px;
  font-weight: 600;
  background: ${(p) => (p.$active ? '#adaff6' : 'none')};
`;
const MenuSection = styled.section`
  padding: 31px 0 29px;
  border-top: 1px solid #dedede;
  &:last-child { padding-bottom: 0; }
`;
const SectionHead = styled.div`
  display: flex;
  justify-content: space-between;
`;
const MoreLink = styled.a`
  color: #7678ff;
  font-weight: 600;
  text-decoration: none;
`;
const ToolGrid = styled.div`
  display: grid;
  grid-template-columns: repeat(4, 1fr);
  row-gap: 28px;
  margin: 23px -18px 0;
`;
const ToolButton = styled.button`
  display: flex;
  flex-direction: column;
  align-items: center;
  gap: 14px;
  line-height: 24px;
  white-space: pre-line;
`;
const ToolTile = styled.span`
  width: 96px;
  height: 96px;
  border-radius: 24px;
  background: #f4f4f4;
`;
const Guides = styled.svg`
  position: absolute;
  top: 0;
  left: 0;
  width: 850px;
  height: 220px;
  pointer-events: none;
`;

const Panel = styled.aside`
  padding: 26px 8px 0 24px;
  border-radius: 12px;
  background: #e9e9e9;
`;
const PanelSection = styled.section`
  & + & {
    margin-top: 24px;
    padding-top: 33px;
    border-top: 1px solid #dadada;
  }
  &:last-child { padding-top: 37px; }
`;
const PanelTitle = styled.h2`
  font-weight: 700;
`;
const Hint = styled.p`
  margin-top: 24px;
  color: #757575;
`;
const PanelRow = styled.div<{ $muted?: boolean }>`
  display: flex;
  align-items: center;
  justify-content: space-between;
  height: 32px;
  margin-bottom: 20px;
  color: ${(p) => (p.$muted ? '#a3a3a3' : 'inherit')};
  button { margin-right: 9px; }
`;
const SwatchRow = styled.div`
  display: flex;
  gap: 24px;
  padding: 22px 18px 6px;
`;
const Swatch = styled.input<{ $color: string }>`
  appearance: none;
  width: 36px;
  height: 36px;
  margin: 0;
  border-radius: 50%;
  background: ${(p) => p.$color};
  &:checked { box-shadow: 0 0 0 6px #cbcbcb; }
`;
const RainbowButton = styled.button`
  width: 36px;
  height: 36px;
  border: 1px solid #666;
  border-radius: 50%;
  background: conic-gradient(#25b8a0, #2b93f0 60deg, #7a34ff 100deg, #e83ac0 140deg, #ff3f7e 190deg, #f7715c 230deg, #c5d33f 270deg, #4cc86c 320deg, #25b8a0);
`;
const Toggle = styled.input`
  appearance: none;
  width: 60px;
  height: 30px;
  margin: 0;
  padding: 3px;
  border-radius: 15px;
  background: #dbdbdb;
  &::before {
    content: '';
    display: block;
    width: 24px;
    height: 24px;
    border-radius: 50%;
    background: #fff;
  }
`;
const SelectBox = styled.div<{ $light?: boolean }>`
  display: grid;
  grid-template-columns: 1fr 12px 19px;
  align-items: center;
  color: ${(p) => (p.$light ? '#222' : '#999')};
  svg {
    grid-area: 1 / 2;
    pointer-events: none;
  }
`;
const Select = styled.select<{ $light?: boolean }>`
  grid-area: 1 / 1 / 2 / 4;
  appearance: none;
  width: 100%;
  height: 48px;
  padding: 0 ${(p) => (p.$light ? 15 : 12)}px;
  border: 1px solid ${(p) => (p.$light ? '#dedede' : '#c8c8c8')};
  border-radius: 10px;
  font-size: ${(p) => (p.$light ? 16 : 17)}px;
  background: ${(p) => (p.$light ? '#f3f3f3' : '#dcdcdc')};
  &:disabled { opacity: 1; }
`;
const CodeList = styled.ul`
  height: 192px;
  margin-top: 12px;
  padding-left: 6px;
  overflow: hidden;
  border: 1px solid #c8c8c8;
  border-radius: 10px;
  color: #757575;
  font-size: 24px;
  line-height: 48px;
  background: #dcdcdc;
`;
const MarkRows = styled.div`
  display: flex;
  flex-direction: column;
  gap: 24px;
  padding-top: 29px;
`;
const MarkRow = styled.div`
  height: 48px;
  display: flex;
  align-items: center;
  gap: 23px;
  padding: 0 6px 0 11px;
`;
const ColorDot = styled.button<{ $fill?: string; $stroke: string }>`
  width: 36px;
  height: 36px;
  margin-left: auto;
  border: 4px solid ${(p) => p.$stroke};
  border-radius: 50%;
  background: ${(p) => p.$fill ?? 'none'};
`;
const OpacityRow = styled.div`
  display: grid;
  grid-template-columns: 24px 1fr 119px;
  align-items: center;
  padding-left: 12px;
  & > :nth-child(2) { margin: 0 12px 0 24px; }
`;
const Opacity = styled.input`
  appearance: none;
  min-width: 0;
  height: 48px;
  padding: 0 4px;
  border: 1px solid #6fa67c;
  border-radius: 10px;
  background:
    linear-gradient(to right, rgba(34, 176, 67, 0), #22b043 96%),
    repeating-conic-gradient(#868e88 0 25%, #dde0dd 0 50%) 3px 1px / 20px 20px;
  &::-webkit-slider-thumb {
    appearance: none;
    width: 13px;
    height: 30px;
    border-radius: 5px;
    background: #fff;
  }
`;
